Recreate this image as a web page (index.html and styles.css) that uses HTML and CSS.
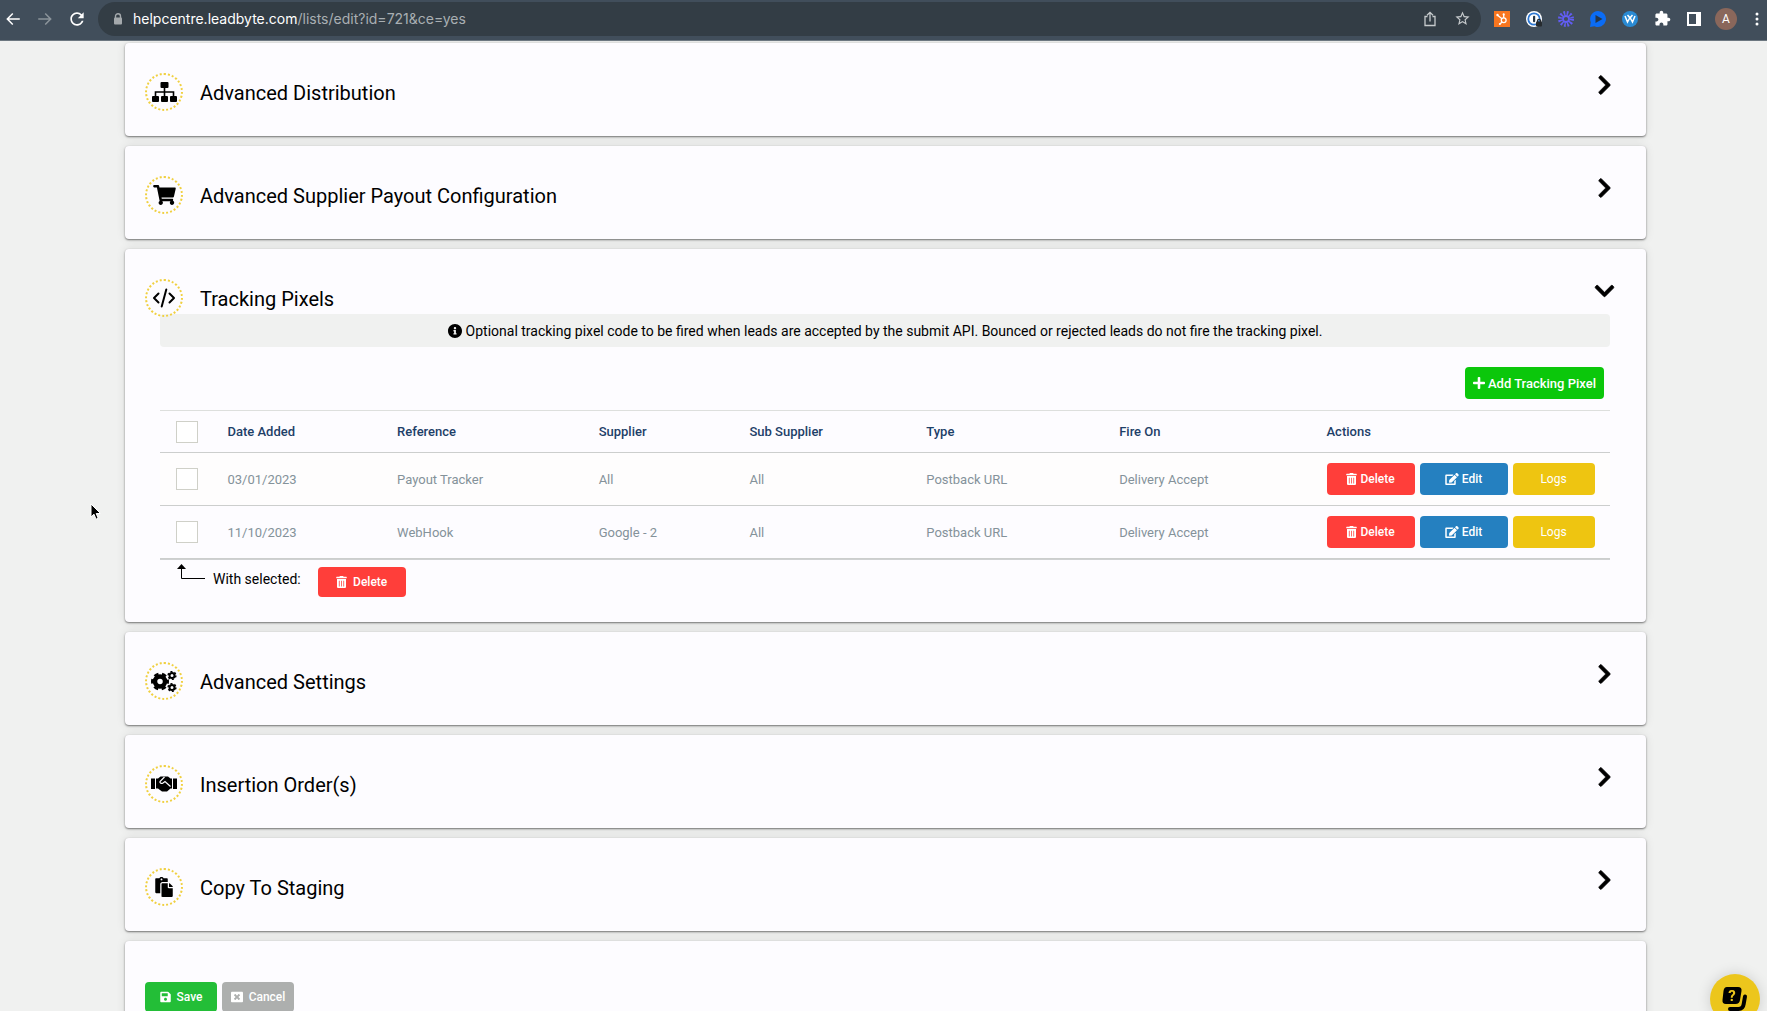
FILE: index.html
```
<!DOCTYPE html>
<html lang="en">

<head>
    <meta charset="UTF-8">
    <meta name="viewport" content="width=device-width, initial-scale=1.0">
    <title>LeadByte - Edit List</title>
    <link rel="stylesheet" href="styles.css">
</head>

<body>
    <!-- shared icons -->
    <svg class="sprite" aria-hidden="true">
        <symbol id="chevron" viewBox="0 0 320 512"><path d="M285.476 272.971L91.132 467.314c-9.373 9.373-24.569 9.373-33.941 0l-22.667-22.667c-9.357-9.357-9.375-24.522-.04-33.901L188.505 256 34.484 101.255c-9.335-9.379-9.317-24.544.04-33.901l22.667-22.667c9.373-9.373 24.569-9.373 33.941 0L285.475 239.03c9.373 9.372 9.373 24.568.001 33.941z" stroke="#000" stroke-width="16"/></symbol>
        <symbol id="trash" viewBox="0 0 448 512"><path d="M32 464a48 48 0 0 0 48 48h288a48 48 0 0 0 48-48V128H32zm272-256a16 16 0 0 1 32 0v224a16 16 0 0 1-32 0zm-96 0a16 16 0 0 1 32 0v224a16 16 0 0 1-32 0zm-96 0a16 16 0 0 1 32 0v224a16 16 0 0 1-32 0zM432 32H312l-9.4-18.7A24 24 0 0 0 281.1 0H166.8a23.72 23.72 0 0 0-21.4 13.3L136 32H16A16 16 0 0 0 0 48v32a16 16 0 0 0 16 16h416a16 16 0 0 0 16-16V48a16 16 0 0 0-16-16z"/></symbol>
        <symbol id="pencil" viewBox="0 0 576 512"><path d="M402.6 83.2l90.2 90.2c3.8 3.8 3.8 10 0 13.8L274.4 405.6l-92.8 10.3c-12.4 1.4-22.9-9.1-21.5-21.5l10.3-92.8L388.8 83.2c3.8-3.8 10-3.8 13.8 0zm162-22.9l-48.8-48.8c-15.2-15.2-39.9-15.2-55.2 0l-35.4 35.4c-3.8 3.8-3.8 10 0 13.8l90.2 90.2c3.8 3.8 10 3.8 13.8 0l35.4-35.4c15.2-15.3 15.2-40 0-55.2zM384 346.2V448H64V128h229.8c3.2 0 6.2-1.3 8.5-3.5l40-40c7.6-7.6 2.2-20.5-8.5-20.5H48C21.5 64 0 85.5 0 112v352c0 26.5 21.5 48 48 48h352c26.5 0 48-21.5 48-48V306.2c0-10.7-12.9-16-20.5-8.5l-40 40c-2.2 2.3-3.5 5.3-3.5 8.5z"/></symbol>
    </svg>

    <div class="app">
        <!-- browser bar -->
        <header class="browser-bar">
            <button class="bar-btn" aria-label="Back"><svg width="18" height="18" viewBox="0 0 24 24" fill="#fff"><path d="M21 11H6.83l5.59-5.59L11 4l-8 8 8 8 1.41-1.41L6.83 13H21v-2z"/></svg></button>
            <button class="bar-btn" aria-label="Forward"><svg width="18" height="18" viewBox="0 0 24 24" fill="#8b949b"><path d="M3 11h14.17l-5.59-5.59L13 4l8 8-8 8-1.41-1.41L17.17 13H3v-2z"/></svg></button>
            <button class="bar-btn" aria-label="Reload"><svg width="20" height="20" viewBox="0 0 24 24" fill="#fff"><path d="M17.65 6.35C16.2 4.9 14.21 4 12 4c-4.42 0-7.99 3.58-7.99 8s3.57 8 7.99 8c3.73 0 6.84-2.55 7.73-6h-2.08c-.82 2.33-3.04 4-5.65 4-3.31 0-6-2.69-6-6s2.69-6 6-6c1.66 0 3.14.69 4.22 1.78L13 11h7V4l-2.35 2.35z"/></svg></button>

            <div class="address">
                <svg width="10" height="12" viewBox="0 0 10 12"><path d="M2.5 5.500V3.200a2.500 2.500 0 0 1 5 0V5.500" fill="none" stroke="#a4a9ac" stroke-width="1.400"/><rect x="1" y="4.500" width="8" height="7" rx="1" fill="#a4a9ac"/></svg>
                <div class="url"><span class="host">helpcentre.leadbyte.com</span>/lists/edit?id=721&amp;ce=yes</div>
                <button class="bar-btn" aria-label="Share"><svg width="16" height="16" viewBox="0 0 16 16" fill="none" stroke="#c6cacc" stroke-width="1.300"><path d="M5.500 5.500H3v9h10v-9h-2.500M8 10.500V1.500M5 4.300l3-3 3 3"/></svg></button>
                <button class="bar-btn" aria-label="Bookmark"><svg width="17" height="17" viewBox="0 0 24 24" fill="#c6cacc"><path d="M22 9.240l-7.190-.620L12 2 9.190 8.630 2 9.240l5.460 4.730L5.820 21 12 17.270 18.180 21l-1.630-7.030L22 9.240zM12 15.400l-3.760 2.270 1-4.280-3.320-2.880 4.380-.380L12 6.100l1.710 4.040 4.380.380-3.320 2.880 1 4.280L12 15.400z"/></svg></button>
            </div>

            <button class="bar-btn" aria-label="HubSpot"><svg width="16" height="16" viewBox="0 0 16 16"><path fill="#f8761f" d="M0 0h16v16H0z"/><g fill="none" stroke="#fff" stroke-width="1.300"><circle cx="9.700" cy="9.300" r="2.400"/><path d="M9.700 7V3.500M8 7.700L3.500 4.200M8 11l-2 2"/></g><g fill="#fff"><circle cx="9.700" cy="3.400" r="1.100"/><circle cx="3.500" cy="4" r="1.200"/><circle cx="5.800" cy="13" r="1"/></g></svg></button>
            <button class="bar-btn" aria-label="1Password"><svg width="18" height="18" viewBox="0 0 18 18"><circle cx="9" cy="9" r="8" fill="#fff"/><circle cx="9" cy="9" r="5.700" fill="none" stroke="#2e78d2" stroke-width="1.800"/><rect x="8" y="5.800" width="2.200" height="6.400" rx="1" fill="#27384a"/><path d="M12.500 12v-1.200a1.500 1.500 0 0 1 3 0V12" fill="none" stroke="#262b2f" stroke-width="1.300"/><rect x="11" y="11.500" width="6" height="5" rx="1" fill="#262b2f"/></svg></button>
            <button class="bar-btn" aria-label="Loom"><svg width="18" height="18" viewBox="0 0 18 18" fill="none" stroke="#625df5"><circle cx="9" cy="9" r="3" stroke-width="1.800"/><circle cx="9" cy="9" r="5.800" stroke-width="4.400" stroke-dasharray="1.600 1.437"/></svg></button>
            <button class="bar-btn" aria-label="Video recorder"><svg width="18" height="18" viewBox="0 0 18 18"><path fill="#0b6cf5" d="M9 1a8 8 0 1 1-3.500 15.200L1 17l.800-4.700A8 8 0 0 1 9 1z"/><path fill="#25364a" d="M6.500 5l7 4-7 4z"/></svg></button>
            <button class="bar-btn" aria-label="Webflow"><svg width="18" height="18" viewBox="0 0 18 18"><circle cx="9" cy="9" r="8" fill="#2a8bd4"/><path d="M4 6l2.500 6L9 7.500 11.500 12 14 6M6.500 5L9 8l2.500-3" fill="none" stroke="#fff" stroke-width="1.500"/></svg></button>
            <button class="bar-btn" aria-label="Extensions"><svg width="17" height="17" viewBox="0 0 24 24" fill="#fff"><path d="M20.500 11H19V7c0-1.100-.900-2-2-2h-4V3.500C13 2.120 11.880 1 10.500 1S8 2.120 8 3.500V5H4c-1.100 0-1.990.900-1.990 2v3.800H3.500c1.490 0 2.700 1.210 2.700 2.700s-1.210 2.700-2.700 2.700H2V20c0 1.100.900 2 2 2h3.800v-1.500c0-1.490 1.210-2.700 2.700-2.700 1.490 0 2.700 1.210 2.700 2.700V22H17c1.100 0 2-.900 2-2v-4h1.500c1.380 0 2.500-1.120 2.500-2.500S21.880 11 20.500 11z"/></svg></button>
            <button class="bar-btn" aria-label="Side panel"><svg width="14" height="14" viewBox="0 0 14 14"><path fill="#fff" fill-rule="evenodd" d="M0 0h14v14H0zM2 2v10h7V2z"/></svg></button>
            <button class="bar-btn avatar" aria-label="Profile">A</button>
            <button class="bar-btn" aria-label="Menu"><svg width="4" height="14" viewBox="0 0 4 14" fill="#fff"><circle cx="2" cy="2" r="1.500"/><circle cx="2" cy="7" r="1.500"/><circle cx="2" cy="12" r="1.500"/></svg></button>
        </header>

        <main class="page">
            <section class="card">
                <div class="card-head">
                    <span class="card-icon"><svg width="25" height="20" viewBox="0 0 25 20"><g><rect x="8.500" width="8" height="6" rx="1"/><rect y="14" width="7" height="6" rx="1"/><rect x="9" y="14" width="7" height="6" rx="1"/><rect x="18" y="14" width="7" height="6" rx="1"/></g><path d="M12.500 5v9M3.500 14v-4h18v4" fill="none" stroke="#000" stroke-width="1.600"/></svg></span>
                    <h2>Advanced Distribution</h2>
                    <button class="toggle" aria-label="Open Advanced Distribution"><svg width="15" height="22"><use href="#chevron"/></svg></button>
                </div>
            </section>

            <section class="card">
                <div class="card-head">
                    <span class="card-icon"><svg width="23" height="20" viewBox="0 0 576 512"><path d="M528.120 301.319l47.273-208C578.806 78.301 567.391 64 551.990 64H159.208l-9.166-44.810C147.758 8.021 137.930 0 126.529 0H24C10.745 0 0 10.745 0 24v16c0 13.255 10.745 24 24 24h69.883l70.248 343.435C147.325 417.100 136 435.222 136 456c0 30.928 25.072 56 56 56s56-25.072 56-56c0-15.674-6.447-29.835-16.824-40h209.647C430.447 426.165 424 440.326 424 456c0 30.928 25.072 56 56 56s56-25.072 56-56c0-22.172-12.888-41.332-31.579-50.405l5.517-24.276c3.413-15.018-8.002-29.319-23.403-29.319H218.117l-6.545-32h293.145c11.206 0 20.920-7.754 23.403-18.681z"/></svg></span>
                    <h2>Advanced Supplier Payout Configuration</h2>
                    <button class="toggle" aria-label="Open Advanced Supplier Payout Configuration"><svg width="15" height="22"><use href="#chevron"/></svg></button>
                </div>
            </section>

            <!-- tracking pixels, the open card -->
            <section class="card open">
                <div class="card-head">
                    <span class="card-icon"><svg width="24" height="20" viewBox="0 0 24 20" fill="none" stroke="#000" stroke-width="2" stroke-linecap="round" stroke-linejoin="round"><path d="M6.500 5.500L2 10l4.500 4.500M17.500 5.500L22 10l-4.500 4.500M14.300 1.500l-4.600 17"/></svg></span>
                    <h2>Tracking Pixels</h2>
                    <button class="toggle" aria-label="Close Tracking Pixels"><svg width="15" height="22"><use href="#chevron"/></svg></button>
                </div>
                <div class="card-body">
                    <p class="note"><svg width="14" height="14" viewBox="8 8 496 496"><path d="M256 8C119.043 8 8 119.083 8 256c0 136.997 111.043 248 248 248s248-111.003 248-248C504 119.083 392.957 8 256 8zm0 110c23.196 0 42 18.804 42 42s-18.804 42-42 42-42-18.804-42-42 18.804-42 42-42zm56 254c0 6.627-5.373 12-12 12h-88c-6.627 0-12-5.373-12-12v-24c0-6.627 5.373-12 12-12h12v-64h-12c-6.627 0-12-5.373-12-12v-24c0-6.627 5.373-12 12-12h64c6.627 0 12 5.373 12 12v100h12c6.627 0 12 5.373 12 12v24z"/></svg>Optional tracking pixel code to be fired when leads are accepted by the submit API. Bounced or rejected leads do not fire the tracking pixel.</p>

                    <div class="tools">
                        <button class="btn add"><svg width="12" height="14" viewBox="0 0 448 512"><path d="M416 208H272V64c0-17.670-14.330-32-32-32h-32c-17.670 0-32 14.330-32 32v144H32c-17.670 0-32 14.330-32 32v32c0 17.670 14.330 32 32 32h144v144c0 17.670 14.330 32 32 32h32c17.670 0 32-14.330 32-32V304h144c17.670 0 32-14.330 32-32v-32c0-17.670-14.330-32-32-32z"/></svg>Add Tracking Pixel</button>
                    </div>

                    <table class="pixels">
                        <colgroup>
                            <col class="col-check"><col class="col-date"><col class="col-ref"><col class="col-supplier"><col class="col-sub"><col class="col-type"><col class="col-fire"><col class="col-actions">
                        </colgroup>
                        <thead>
                            <tr>
                                <th><input type="checkbox" aria-label="Select all"></th>
                                <th>Date Added</th>
                                <th>Reference</th>
                                <th>Supplier</th>
                                <th>Sub Supplier</th>
                                <th>Type</th>
                                <th>Fire On</th>
                                <th>Actions</th>
                            </tr>
                        </thead>
                        <tbody>
                            <tr>
                                <td><input type="checkbox" aria-label="Select Payout Tracker"></td>
                                <td>03/01/2023</td>
                                <td>Payout Tracker</td>
                                <td>All</td>
                                <td>All</td>
                                <td>Postback URL</td>
                                <td>Delivery Accept</td>
                                <td>
                                    <div class="actions">
                                        <button class="btn delete"><svg width="11" height="12"><use href="#trash"/></svg>Delete</button>
                                        <button class="btn edit"><svg width="14" height="12"><use href="#pencil"/></svg>Edit</button>
                                        <button class="btn logs">Logs</button>
                                    </div>
                                </td>
                            </tr>
                            <tr>
                                <td><input type="checkbox" aria-label="Select WebHook"></td>
                                <td>11/10/2023</td>
                                <td>WebHook</td>
                                <td>Google - 2</td>
                                <td>All</td>
                                <td>Postback URL</td>
                                <td>Delivery Accept</td>
                                <td>
                                    <div class="actions">
                                        <button class="btn delete"><svg width="11" height="12"><use href="#trash"/></svg>Delete</button>
                                        <button class="btn edit"><svg width="14" height="12"><use href="#pencil"/></svg>Edit</button>
                                        <button class="btn logs">Logs</button>
                                    </div>
                                </td>
                            </tr>
                        </tbody>
                    </table>

                    <div class="selected">
                        <svg width="28" height="16" viewBox="0 0 28 16"><path d="M4.500 4v10.500H28" fill="none" stroke="#000"/><path d="M4.500 0L9 5H0z"/></svg>
                        <span>With selected:</span>
                        <button class="btn delete"><svg width="11" height="12"><use href="#trash"/></svg>Delete</button>
                    </div>
                </div>
            </section>

            <section class="card">
                <div class="card-head">
                    <span class="card-icon"><svg width="26" height="21" viewBox="0 0 26 21" fill="none" stroke="#000"><circle cx="9" cy="10.500" r="5" stroke-width="4.500"/><circle cx="9" cy="10.500" r="7.800" stroke-width="2.400" stroke-dasharray="4.500 3.668" stroke-dashoffset="2.250"/><circle cx="21" cy="4.500" r="2.500" stroke-width="2"/><circle cx="21" cy="4.500" r="3.900" stroke-width="1.400" stroke-dasharray="2.042"/><circle cx="21" cy="16.500" r="2.500" stroke-width="2"/><circle cx="21" cy="16.500" r="3.900" stroke-width="1.400" stroke-dasharray="2.042"/></svg></span>
                    <h2>Advanced Settings</h2>
                    <button class="toggle" aria-label="Open Advanced Settings"><svg width="15" height="22"><use href="#chevron"/></svg></button>
                </div>
            </section>

            <section class="card">
                <div class="card-head">
                    <span class="card-icon"><svg width="26" height="16" viewBox="0 0 26 16"><path d="M0 2.500h4v10.500H0zM22 2.500h4v10.500h-4zM5 2.500h2L9.500.500h7.500l2.500 2H21v10h-1.500L16 15.500h-5L7 12.500H5z"/><path d="M13.500 1L9 5.500c-.500 1.500 1.500 2.500 3 1.500l2-1.500 5.500 5" fill="none" stroke="#fdfcff" stroke-width="1.200"/></svg></span>
                    <h2>Insertion Order(s)</h2>
                    <button class="toggle" aria-label="Open Insertion Orders"><svg width="15" height="22"><use href="#chevron"/></svg></button>
                </div>
            </section>

            <section class="card">
                <div class="card-head">
                    <span class="card-icon"><svg width="18" height="20" viewBox="0 0 448 512"><path d="M128 184c0-30.879 25.122-56 56-56h136V56c0-13.255-10.745-24-24-24h-80.610C204.306 12.890 183.637 0 160 0s-44.306 12.890-55.390 32H24C10.745 32 0 42.745 0 56v336c0 13.255 10.745 24 24 24h104V184zm32-144c13.255 0 24 10.745 24 24s-10.745 24-24 24-24-10.745-24-24 10.745-24 24-24zm184 248h104v200c0 13.255-10.745 24-24 24H184c-13.255 0-24-10.745-24-24V184c0-13.255 10.745-24 24-24h136v104c0 13.200 10.800 24 24 24zm104-38.059V256h-96v-96h6.059a24 24 0 0 1 16.970 7.029l65.941 65.941a24.002 24.002 0 0 1 7.030 16.971z"/></svg></span>
                    <h2>Copy To Staging</h2>
                    <button class="toggle" aria-label="Open Copy To Staging"><svg width="15" height="22"><use href="#chevron"/></svg></button>
                </div>
            </section>

            <section class="card form-buttons">
                <button class="btn save"><svg width="11" height="12" viewBox="0 0 448 512"><path d="M433.941 129.941l-83.882-83.882A48 48 0 0 0 316.118 32H48C21.490 32 0 53.490 0 80v352c0 26.510 21.490 48 48 48h352c26.510 0 48-21.490 48-48V163.882a48 48 0 0 0-14.059-33.941zM224 416c-35.346 0-64-28.654-64-64 0-35.346 28.654-64 64-64s64 28.654 64 64c0 35.346-28.654 64-64 64zm96-304.520V212c0 6.627-5.373 12-12 12H76c-6.627 0-12-5.373-12-12V108c0-6.627 5.373-12 12-12h228.520c3.183 0 6.235 1.264 8.485 3.515l3.480 3.480A11.996 11.996 0 0 1 320 111.480z"/></svg>Save</button>
                <button class="btn cancel"><svg width="12" height="12" viewBox="0 0 512 512"><path d="M464 32H48C21.500 32 0 53.500 0 80v352c0 26.500 21.500 48 48 48h416c26.500 0 48-21.500 48-48V80c0-26.500-21.500-48-48-48zm-83.600 290.500c4.800 4.800 4.800 12.600 0 17.400l-40.500 40.500c-4.800 4.800-12.600 4.800-17.400 0L256 313.300l-66.500 67.100c-4.800 4.800-12.600 4.800-17.400 0l-40.500-40.500c-4.800-4.800-4.800-12.600 0-17.400l67.100-66.500-67.100-66.500c-4.800-4.800-4.800-12.600 0-17.400l40.500-40.500c4.800-4.800 12.600-4.800 17.400 0l66.500 67.100 66.500-67.100c4.800-4.800 12.600-4.800 17.400 0l40.500 40.500c4.800 4.800 4.800 12.600 0 17.400L313.300 256l67.100 66.500z"/></svg>Cancel</button>
            </section>
        </main>
    </div>

    <!-- help button, sits over the page -->
    <button class="help" aria-label="Help"><svg width="26" height="26" viewBox="0 0 26 26"><path d="M5 1h11q4 0 3.500 4l-1.500 9q-.500 4-4.500 4H4q-4 0-3.500-4L1.500 5Q2 1 5 1z"/><path d="M23 10.500L21.700 18q-.700 5-5.200 5H8" fill="none" stroke="#000" stroke-width="4" stroke-linecap="round"/><text x="10" y="15" text-anchor="middle" class="help-mark">?</text></svg></button>

    <svg class="pointer" width="12" height="18" viewBox="0 0 12 18"><path d="M1 1v13l3-2.800 2 5 2.200-.900-2-4.800H10.500z" stroke="#fff"/></svg>
</body>

</html>
```
FILE: styles.css
```
* {
    box-sizing: border-box;
}

body {
    margin: 0;
    background-color: #f0f1f0;
    color: #000;
    font-family: Roboto, "Liberation Sans", sans-serif;
    font-size: 14px;
}

button {
    border: 0;
    padding: 0;
    font-family: inherit;
    cursor: pointer;
}

.sprite {
    display: none;
}

.app {
    display: flex;
    flex-direction: column;
    height: 100vh;
    overflow: hidden;
}

/* browser bar */

.browser-bar {
    display: flex;
    flex: none;
    align-items: center;
    gap: 10px;
    height: 41px;
    padding: 0 0 3px 2px;
    background-color: #414e5b;
    border-bottom: 1px solid #6c7780;
}

.bar-btn {
    display: flex;
    flex: none;
    align-items: center;
    justify-content: center;
    width: 22px;
    height: 22px;
    background: none;
}

.bar-btn:last-child {
    width: 20px;
}

.address {
    display: flex;
    flex: 1;
    align-items: center;
    gap: 10px;
    height: 34px;
    padding: 0 8px 0 15px;
    background-color: #333d45;
    border-radius: 17px;
}

.address .bar-btn:last-child {
    width: 22px;
}

.url {
    flex: 1;
    color: #a9afb3;
    font-family: Inter, "Liberation Sans", sans-serif;
    font-size: 14px;
}

.host {
    color: #fff;
}

.bar-btn.avatar {
    background-color: #8a675b;
    border-radius: 50%;
    color: #fff;
    font-size: 12px;
}

/* cards */

.page {
    flex: 1;
    padding: 2px 121px 0 125px;
    overflow: hidden;
}

.card {
    margin-bottom: 10px;
    background-color: #fdfcff;
    border-radius: 4px;
    box-shadow: 0 1px 2px rgba(0, 0, 0, 0.5), 0 0 10px rgba(0, 0, 0, 0.1);
}

.card-head {
    display: flex;
    align-items: flex-start;
    padding: 30px 32px 23px 20px;
}

.card-icon {
    display: flex;
    align-items: center;
    justify-content: center;
    width: 38px;
    height: 38px;
    border: 2px dotted #f0d040;
    border-radius: 50%;
}

.card-head h2 {
    flex: 1;
    margin: 0 0 0 17px;
    font-size: 20px;
    font-weight: 400;
    line-height: 40px;
}

.toggle {
    display: flex;
    align-items: center;
    justify-content: center;
    width: 20px;
    height: 24px;
    background: none;
}

.open .toggle svg {
    transform: rotate(90deg);
}

.open .card-head {
    position: relative;
    padding-bottom: 0;
}

.card-body {
    margin-top: -5px;
    padding: 0 36px 25px 35px;
}

.note {
    display: flex;
    align-items: center;
    justify-content: center;
    gap: 4px;
    height: 33px;
    margin: 0;
    background-color: #f0f1f0;
    border-radius: 4px;
}

.tools {
    display: flex;
    justify-content: flex-end;
    padding: 20px 6px 11px;
}

/* buttons */

.btn {
    display: flex;
    align-items: center;
    justify-content: center;
    gap: 3px;
    width: 88px;
    height: 32px;
    border-radius: 4px;
    color: #fff;
    font-size: 12px;
    font-weight: 500;
}

.btn svg {
    fill: #fff;
}

.btn.add {
    width: auto;
    padding: 0 8px;
    background-color: #0bc70b;
    font-size: 13px;
}

.delete {
    background-color: #ff3e3a;
}

.edit {
    background-color: #2580c0;
}

.btn.logs {
    width: 82px;
    background-color: #eec511;
    font-weight: 400;
}

/* pixels table */

.pixels {
    width: 100%;
    border-collapse: separate;
    border-spacing: 0;
    border-bottom: 1px solid #cfd1d2;
    table-layout: fixed;
}

.pixels th,
.pixels td {
    height: 53px;
    padding: 0 0 0 8px;
    border-bottom: 1px solid #cccecd;
    color: #84929a;
    font-size: 13px;
    font-weight: 400;
    text-align: left;
}

.pixels th {
    height: 43px;
    border-top: 1px solid #dddfdd;
    color: #1d4068;
    font-weight: 500;
}

.pixels th:first-child,
.pixels td:first-child {
    padding-left: 16px;
}

.pixels tbody tr:first-child {
    background-color: #fefdfd;
}

.pixels input {
    display: block;
    width: 22px;
    height: 22px;
    margin: 0;
    appearance: none;
    background-color: #fff;
    border: 1px solid #cfd0c8;
}

.col-check {
    width: 4.1%;
}

.col-date {
    width: 11.7%;
}

.col-ref {
    width: 13.9%;
}

.col-supplier {
    width: 10.4%;
}

.col-sub {
    width: 12.2%;
}

.col-type {
    width: 13.3%;
}

.col-fire {
    width: 14.3%;
}

.actions {
    display: flex;
    gap: 5px;
}

.selected {
    display: flex;
    align-items: flex-start;
    padding: 4px 0 0 17px;
    line-height: 30px;
}

.selected span {
    margin: 0 17px 0 8px;
}

.selected .btn {
    gap: 6px;
    height: 30px;
    margin-top: 3px;
}

.form-buttons {
    display: flex;
    gap: 5px;
    padding: 41px 20px;
}

.form-buttons .btn {
    gap: 6px;
    width: 72px;
    height: 30px;
}

.save {
    background-color: #23be37;
}

.cancel {
    background-color: #adafae;
}

.help {
    position: fixed;
    right: 7px;
    bottom: -13px;
    display: flex;
    align-items: center;
    justify-content: center;
    width: 50px;
    height: 50px;
    background-color: #ecc61c;
    border-radius: 50%;
    box-shadow: 0 0 14px rgba(0, 0, 0, 0.15);
}

.help-mark {
    fill: #ecc61c;
    font-size: 15px;
    font-weight: 700;
}

.pointer {
    position: fixed;
    top: 503px;
    left: 90px;
}
```
